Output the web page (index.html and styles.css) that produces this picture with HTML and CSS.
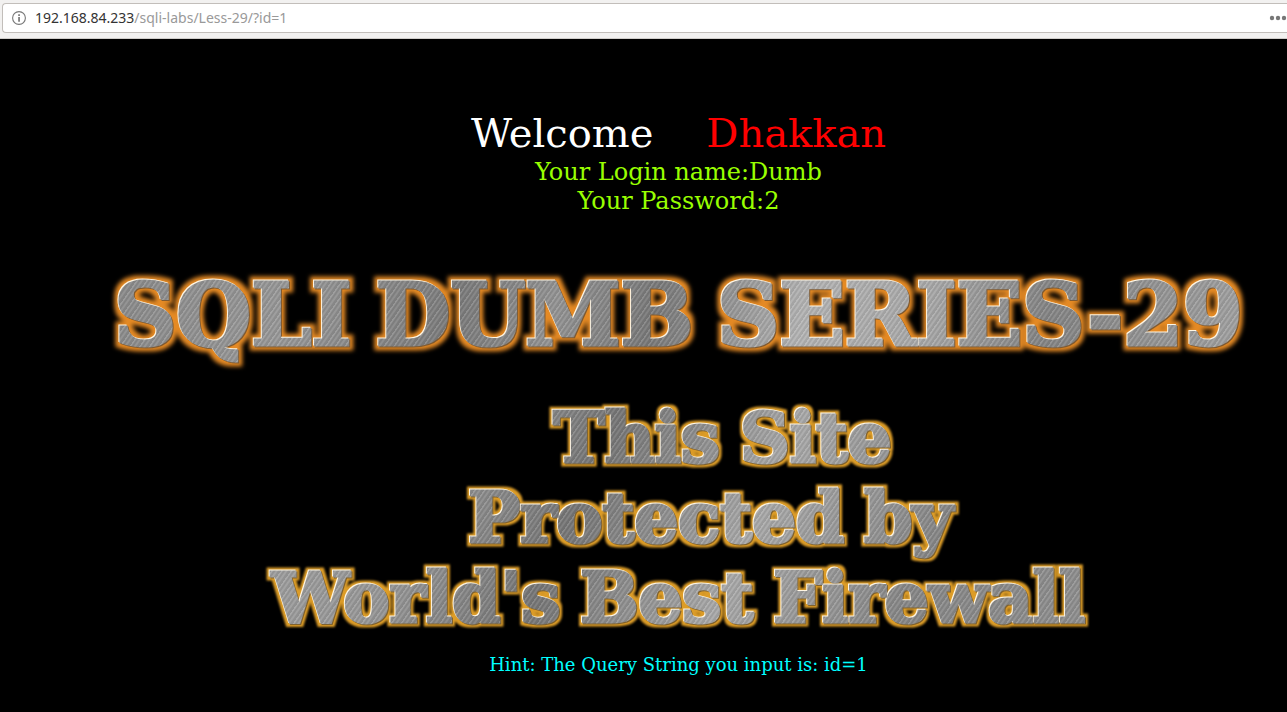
FILE: index.html
```html
<!DOCTYPE html>
<html lang="en">
<head>
<meta charset="utf-8">
<title>Less-29</title>
<link rel="stylesheet" href="styles.css">
</head>
<body>
<svg class="defs" aria-hidden="true">
  <defs>
    <filter id="metal-orange" x="-5%" y="-20%" width="110%" height="140%" color-interpolation-filters="sRGB">
      <feMorphology in="SourceAlpha" operator="dilate" radius="4" result="wide"/>
      <feGaussianBlur in="wide" stdDeviation="2" result="soft"/>
      <feFlood flood-color="#e58a24"/>
      <feComposite in2="soft" operator="in" result="glow"/>
      <feOffset in="SourceAlpha" dx="-1" dy="-1" result="up"/>
      <feFlood flood-color="#fff6e4"/>
      <feComposite in2="up" operator="in" result="light"/>
      <feOffset in="SourceAlpha" dx="1" dy="1" result="down"/>
      <feFlood flood-color="#805a30"/>
      <feComposite in2="down" operator="in" result="dark"/>
      <feMerge><feMergeNode in="glow"/><feMergeNode in="dark"/><feMergeNode in="light"/><feMergeNode in="SourceGraphic"/></feMerge>
    </filter>
    <filter id="metal-gold" x="-5%" y="-20%" width="110%" height="140%" color-interpolation-filters="sRGB">
      <feMorphology in="SourceAlpha" operator="dilate" radius="3" result="wide"/>
      <feGaussianBlur in="wide" stdDeviation="1" result="soft"/>
      <feFlood flood-color="#dc9c27"/>
      <feComposite in2="soft" operator="in" result="glow"/>
      <feOffset in="SourceAlpha" dx="-1" dy="-1" result="up"/>
      <feFlood flood-color="#fff6e4"/>
      <feComposite in2="up" operator="in" result="light"/>
      <feOffset in="SourceAlpha" dx="1" dy="1" result="down"/>
      <feFlood flood-color="#80622e"/>
      <feComposite in2="down" operator="in" result="dark"/>
      <feMerge><feMergeNode in="glow"/><feMergeNode in="dark"/><feMergeNode in="light"/><feMergeNode in="SourceGraphic"/></feMerge>
    </filter>
  </defs>
</svg>
<header class="toolbar">
  <div class="address">
    <svg class="info" viewBox="0 0 14 14" aria-hidden="true"><circle cx="7" cy="7" r="6.4" fill="none" stroke="#777" stroke-width="1.1"/><path d="M6.2 3.2h1.7v1.7H6.2zM6.2 6h1.7v4.8H6.2z" fill="#777"/></svg>
    <div class="url"><span class="host">192.168.84.233</span>/sqli-labs/Less-29/?id=1</div>
    <button class="more" aria-label="Page actions"><svg viewBox="0 0 18 6" aria-hidden="true"><circle cx="3" cy="3" r="2.2"/><circle cx="9" cy="3" r="2.2"/><circle cx="15" cy="3" r="2.2"/></svg></button>
  </div>
</header>
<main class="page">
  <div class="welcome"><span>Welcome</span><span class="name">Dhakkan</span></div>
  <div class="login">Your Login name:Dumb<br>Your Password:2</div>
  <h1 class="metal title"><span class="row"><span>SQLI</span> <span>DUMB</span> <span>SERIES-29</span></span></h1>
  <h2 class="metal notice">
    <span class="row first"><span>This</span> <span>Site</span></span>
    <span class="row second"><span>Protected</span> <span>by</span></span>
    <span class="row"><span>World's</span> <span>Best</span> <span>Firewall</span></span>
  </h2>
  <p class="hint">Hint: The Query String you input is: id=1</p>
</main>
</body>
</html>
```
FILE: styles.css
```css
* { box-sizing: border-box; }
body {
  margin: 0;
  min-height: 100vh;
  background: #000;
  font-family: "DejaVu Serif", serif;
  overflow-x: hidden;
}
.defs { position: absolute; width: 0; height: 0; }
.toolbar {
  padding: 3px 0 5px 2px;
  background: #f2f1f0;
  border-bottom: 1px solid #d0cdca;
}
.address {
  display: flex;
  align-items: center;
  height: 30px;
  padding-left: 9px;
  background: #fff;
  border: 1px solid #c2beba;
  border-right: 0;
  border-radius: 4px 0 0 4px;
}
.info { width: 14px; height: 14px; margin-right: 9px; }
.url {
  flex: 1;
  color: #999;
  font: 14px/20px "Noto Sans", sans-serif;
}
.host { color: #333; }
.more { display: flex; padding: 0; border: 0; background: none; }
.more svg { width: 18px; height: 6px; fill: #777; }
.page {
  padding: 70px 0 32px 70px;
  text-align: center;
}
.welcome {
  display: flex;
  justify-content: center;
  gap: 53px;
  color: #fff;
  font-size: 40px;
  line-height: 48px;
}
.name { color: #f00; }
.login {
  padding-top: 1px;
  color: #9f0;
  font-size: 24px;
  line-height: 29px;
}
.metal {
  margin: 0;
  color: transparent;
  font-weight: bold;
  white-space: nowrap;
  -webkit-background-clip: text;
  background-clip: text;
}
.row {
  display: flex;
  justify-content: center;
}
.title {
  margin-top: 48px;
  font-size: 86px;
  line-height: 102px;
  -webkit-text-stroke: 3px transparent;
  background-image:
    repeating-linear-gradient(125deg, #fff2 0 1px, #0001 2px 3px, #fff1 4px 5px, #0001 6px 8px),
    linear-gradient(100deg, #888 0%, #999 18%, #7c7c7c 32%, #949494 40%, #7a7a7a 48%, #b4b4b4 60%, #aaa 70%, #858585 80%, #aaa 100%);
  filter: url(#metal-orange);
}
.title .row { gap: 24px; }
.notice {
  margin-top: 32px;
  font-size: 69px;
  line-height: 80px;
  -webkit-text-stroke: 3px transparent;
  background-image:
    repeating-linear-gradient(125deg, #fff2 0 1px, #0001 2px 3px, #fff1 4px 5px, #0001 6px 8px),
    linear-gradient(115deg, #aaa 0%, #999 30%, #777 42%, #aaa 56%, #888 70%, #999 100%);
  filter: url(#metal-gold);
}
.notice .row { gap: 20px; }
.notice .first { padding-left: 88px; }
.notice .second { padding-left: 64px; }
.hint {
  margin: 16px 0 0;
  color: #0ff;
  font-size: 18px;
  line-height: 22px;
}
```
